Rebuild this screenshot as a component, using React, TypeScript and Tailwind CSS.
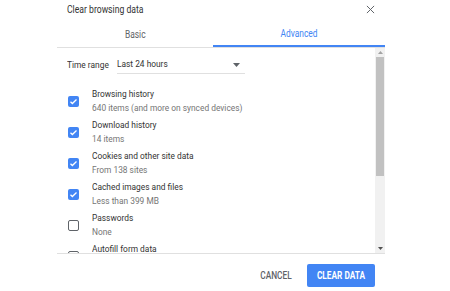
import React from 'react';

const items = [
  { title: 'Browsing history', sub: '640 items (and more on synced devices)', checked: true },
  { title: 'Download history', sub: '14 items', checked: true },
  { title: 'Cookies and other site data', sub: 'From 138 sites', checked: true },
  { title: 'Cached images and files', sub: 'Less than 399 MB', checked: true },
  { title: 'Passwords', sub: 'None', checked: false },
  { title: 'Autofill form data', sub: 'None', checked: false },
];

const Checkbox: React.FC<{ checked: boolean }> = ({ checked }) =>
  checked ? (
    <div className="w-[11px] h-[11px] rounded-[2px] bg-[#4285f4] flex items-center justify-center">
      <svg width="9" height="9" viewBox="0 0 24 24" fill="none" stroke="white" strokeWidth="3.5">
        <path d="M4 12.5l5 5L20 6.5" />
      </svg>
    </div>
  ) : (
    <div className="w-[11px] h-[11px] rounded-[2px] border-[1.5px] border-[#5f6368]" />
  );

export default function App() {
  return (
    <div
      className="w-[450px] h-[291px] bg-white overflow-hidden"
      style={{ fontFamily: 'Roboto, "Liberation Sans", sans-serif' }}
    >
      <div className="ml-[57px] w-[328px] flex flex-col">
        <div className="h-[19px] flex items-center justify-between pl-[10px] pr-[10px]">
          <span className="block text-[11.5px] text-[#333333] whitespace-nowrap origin-left scale-x-[0.75]">
            Clear browsing data
          </span>
          <svg width="9" height="9" viewBox="0 0 10 10" stroke="#5f6368" strokeWidth="1.1">
            <path d="M1 1l8 8M9 1l-8 8" />
          </svg>
        </div>
        <div className="mt-[3px] flex border-b border-[#e0e0e0]">
          <div className="w-[156px] h-[25px] flex items-center justify-center text-[10px] text-[#5f6368]">
            <span className="block scale-x-[0.84]">Basic</span>
          </div>
          <div className="flex-1 h-[25px] flex items-center justify-center text-[10px] text-[#4285f4] border-b-2 border-[#4285f4]">
            <span className="block scale-x-[0.84]">Advanced</span>
          </div>
        </div>
        <div className="h-[206px] flex border-b border-[#e0e0e0]">
          <div className="flex-1 pl-[10px] overflow-hidden text-[9.5px] whitespace-nowrap">
            <div className="mt-[8px] flex items-center text-[#333333]">
              <span className="block w-[50px] origin-left scale-x-[0.88]">Time range</span>
              <div className="w-[128px] h-[18px] flex items-center justify-between border-b border-[#e0e0e0] pr-[5px]">
                <span className="block origin-left scale-x-[0.88]">Last 24 hours</span>
                <svg width="7" height="4" viewBox="0 0 7 4">
                  <path d="M0 0h7L3.5 4z" fill="#5f6368" />
                </svg>
              </div>
            </div>
            <div className="mt-[13px] flex flex-col gap-[3px]">
              {items.map((it) => (
                <div key={it.title} className="flex items-center h-[28px]">
                  <div className="w-[25px] pl-[1px]">
                    <Checkbox checked={it.checked} />
                  </div>
                  <div className="flex flex-col leading-[14px]">
                    <span className="block text-[#333333] origin-left scale-x-[0.88]">{it.title}</span>
                    <span className="block text-[#757575] origin-left scale-x-[0.88]">{it.sub}</span>
                  </div>
                </div>
              ))}
            </div>
          </div>
          <div className="w-[10px] bg-[#f1f1f1] flex flex-col items-center">
            <div className="h-[9px] flex items-center justify-center">
              <svg width="5" height="3" viewBox="0 0 5 3">
                <path d="M0 3h5L2.5 0z" fill="#a3a3a3" />
              </svg>
            </div>
            <div className="w-[8px] h-[119px] bg-[#c1c1c1]" />
            <div className="flex-1" />
            <div className="h-[9px] flex items-center justify-center">
              <svg width="5" height="3" viewBox="0 0 5 3">
                <path d="M0 0h5L2.5 3z" fill="#505050" />
              </svg>
            </div>
          </div>
        </div>
        <div className="mt-[10px] flex items-center justify-end gap-[12px] pr-[10px]">
          <span className="block text-[10px] font-medium text-[#5f6368] scale-x-[0.83]">CANCEL</span>
          <div className="w-[68px] h-[23px] rounded-[2px] bg-[#4285f4] flex items-center justify-center text-[10px] font-bold text-white">
            <span className="block scale-x-[0.83]">CLEAR DATA</span>
          </div>
        </div>
      </div>
    </div>
  );
}
